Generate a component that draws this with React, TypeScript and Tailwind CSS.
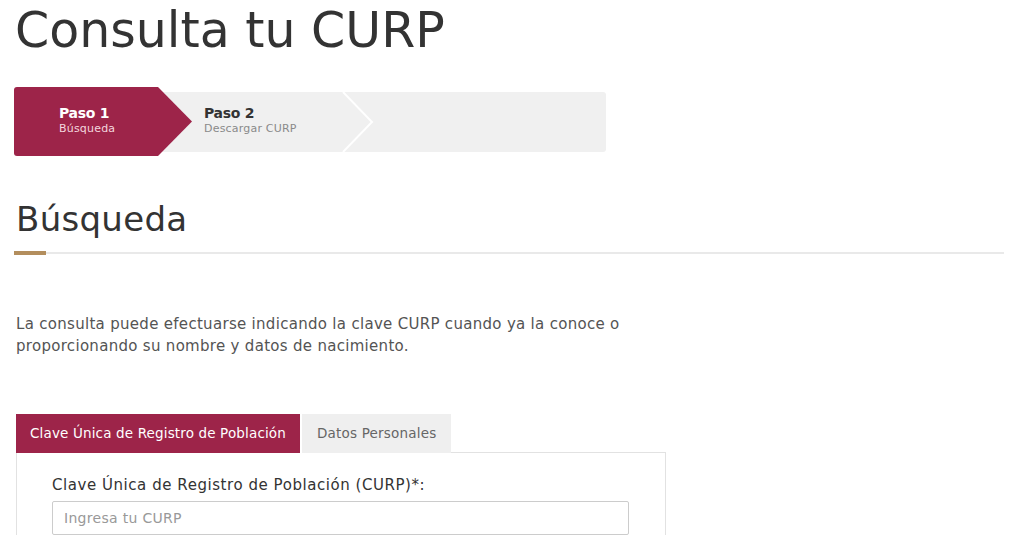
import React from "react";

const font = { fontFamily: '"DejaVu Sans", "Noto Sans", Arial, sans-serif' };

function Stepper() {
  return (
    <div className="mt-[26px] ml-[14px] flex h-[69px] w-[592px] items-center">
      <div className="relative z-10 flex h-[69px] w-[178px] shrink-0 flex-col justify-center rounded-l-[3px] bg-[#9d2449] pb-[3px] pl-[45px] [clip-path:polygon(0_0,144px_0,178px_50%,144px_100%,0_100%)]">
        <div className="text-[14px] font-bold leading-[17px] tracking-[-0.3px] text-white">Paso 1</div>
        <div className="text-[11px] leading-[14px] tracking-[0.2px] text-[#f3d6de]">Búsqueda</div>
      </div>
      <div className="relative -ml-[34px] flex h-[60px] flex-1 items-center rounded-r-[3px] bg-[#f0f0f0] pb-[3px] pl-[46px]">
        <div className="flex flex-col">
          <div className="text-[14px] font-bold leading-[17px] tracking-[-0.3px] text-[#333]">Paso 2</div>
          <div className="text-[11px] leading-[14px] tracking-[0.2px] text-[#8a8a8a]">Descargar CURP</div>
        </div>
        <svg className="absolute left-[184px] top-0 h-[60px] w-[34px]" viewBox="0 0 34 60" fill="none">
          <polyline points="1,0 30,30 1,60" stroke="#ffffff" strokeWidth="2" />
        </svg>
      </div>
    </div>
  );
}

function Tabs() {
  return (
    <div className="mt-[57px] ml-[16px] w-[650px]">
      <div className="flex items-end">
        <div className="flex h-[39px] items-center bg-[#9d2449] px-[14px] text-[13.5px] tracking-[0.15px] text-white">
          Clave Única de Registro de Población
        </div>
        <div className="ml-[2px] flex h-[39px] items-center bg-[#efefef] px-[15px] text-[13.5px] tracking-[0.2px] text-[#666]">
          Datos Personales
        </div>
        <div className="flex-1 border-b border-[#e2e2e2]" />
      </div>
      <div className="border-x border-[#e2e2e2] px-[35px] pt-[22px]">
        <label className="block text-[15px] leading-[20px] tracking-[0.55px] text-[#333]">
          Clave Única de Registro de Población (CURP)*:
        </label>
        <input
          className="mt-[6px] h-[34px] w-[577px] rounded-[2px] border border-[#cccccc] px-[11px] text-[14px] tracking-[0.3px] text-[#333] placeholder:text-[#999] outline-none"
          placeholder="Ingresa tu CURP"
          style={font}
        />
      </div>
    </div>
  );
}

export default function App() {
  return (
    <div className="min-h-[536px] w-[1024px] overflow-hidden bg-white" style={font}>
      <h1 className="pl-[15px] pt-[1px] text-[49px] leading-[60px] text-[#333]">
        Consulta tu CURP
      </h1>
      <Stepper />
      <h2 className="mt-[43px] pl-[16px] text-[34px] leading-[40px] tracking-[0.3px] text-[#333]">
        Búsqueda
      </h2>
      <div className="relative ml-[14px] mt-[12px] h-[4px] w-[990px]">
        <div className="absolute left-0 right-0 top-[1px] h-[2px] bg-[#e9e9e9]" />
        <div className="absolute left-0 top-0 h-[4px] w-[32px] bg-[#b38e5d]" />
      </div>
      <p className="ml-[16px] mt-[58px] w-[640px] text-[15px] leading-[22px] tracking-[0.3px] text-[#545454]">
        La consulta puede efectuarse indicando la clave CURP cuando ya la conoce o proporcionando su nombre y datos de nacimiento.
      </p>
      <Tabs />
    </div>
  );
}
